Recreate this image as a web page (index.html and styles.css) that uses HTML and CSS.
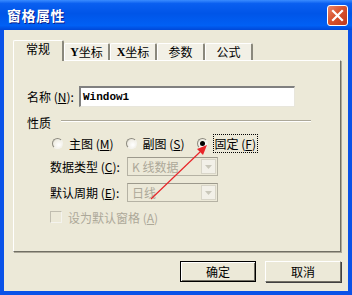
FILE: index.html
```html
<!DOCTYPE html>
<html lang="zh-CN">
<head>
  <meta charset="UTF-8">
  <title>窗格属性</title>
  <link rel="stylesheet" href="styles.css">
</head>
<body>
<div class="window">
  <div class="titlebar">
    <span class="title">窗格属性</span>
    <button class="close-btn">
      <svg width="13" height="13" viewBox="0 0 13 13"><path d="M2 2 L11 11 M11 2 L2 11" stroke="#fff" stroke-width="2.2" stroke-linecap="square"/></svg>
    </button>
  </div>
  <div class="client">
    <div class="tabs">
      <div class="tab active">常规</div>
      <div class="tab w46"><span class="latin">Y</span>坐标</div>
      <div class="tab w47"><span class="latin">X</span>坐标</div>
      <div class="tab w48">参数</div>
      <div class="tab w48">公式</div>
    </div>
    <div class="panel">
      <div class="name-row">
        <span class="label">名称 (<u>N</u>):</span>
        <div class="textbox">Window1</div>
      </div>
      <div class="group-head">
        <span>性质</span>
        <div class="group-line"></div>
      </div>
      <div class="radio-row">
        <div class="radio-item"><span class="radio"></span>主图 (<u>M</u>)</div>
        <div class="radio-item"><span class="radio"></span>副图 (<u>S</u>)</div>
        <div class="radio-item"><span class="radio checked"></span><span class="focus">固定 (<u>F</u>)</span></div>
      </div>
      <div class="field-row">
        <span class="field-label">数据类型 (<u>C</u>):</span>
        <div class="combo"><span class="combo-text">K 线数据</span><span class="combo-btn"><svg width="7" height="4" viewBox="0 0 7 4"><path d="M0 0 H7 L3.5 4 Z" fill="#C9C7BA"/></svg></span></div>
      </div>
      <div class="field-row second">
        <span class="field-label">默认周期 (<u>E</u>):</span>
        <div class="combo"><span class="combo-text">日线</span><span class="combo-btn"><svg width="7" height="4" viewBox="0 0 7 4"><path d="M0 0 H7 L3.5 4 Z" fill="#C9C7BA"/></svg></span></div>
      </div>
      <div class="check-row">
        <span class="checkbox"></span>设为默认窗格 (<u>A</u>)
      </div>
    </div>
    <div class="buttons">
      <button class="btn default">确定</button>
      <button class="btn">取消</button>
    </div>
  </div>
  <svg class="annot" width="352" height="295" viewBox="0 0 352 295">
    <line x1="151" y1="199" x2="200" y2="152" stroke="#E8262A" stroke-width="1.2"/>
    <path d="M207 145 L197 149 L203 155 Z" fill="#E8262A"/>
  </svg>
</div>
</body>
</html>
```

FILE: styles.css
```css
body {
  margin: 0;
  padding: 0;
  font-family: "Noto Sans CJK SC", "Liberation Sans", sans-serif;
  font-size: 12px;
  background: #ffffff;
}
.window {
  position: relative;
  width: 352px;
  height: 295px;
  box-sizing: border-box;
  background: #0A52E8;
  display: flex;
  flex-direction: column;
  padding: 0 4px 4px 4px;
}
.titlebar {
  height: 30px;
  margin: 0 -4px;
  padding: 0 4px 0 7px;
  display: flex;
  align-items: center;
  justify-content: space-between;
  background: linear-gradient(to bottom, #3A8CFF 0%, #0A5FF0 12%, #0055E8 45%, #0060F5 85%, #0048D8 100%);
}
.title {
  color: #ffffff;
  font-weight: bold;
  font-size: 14px;
  letter-spacing: 0.5px;
  text-shadow: 1px 1px 0 #0A1E8C;
}
.close-btn {
  width: 21px;
  height: 21px;
  margin-right: 0;
  padding: 0;
  border: 1px solid #ffffff;
  border-radius: 3px;
  background: linear-gradient(to bottom right, #E9856A 0%, #D8532E 45%, #C0391B 100%);
  display: flex;
  align-items: center;
  justify-content: center;
}
.client {
  flex: 1;
  background: #ECE9D8;
  padding: 11px 0 0 9px;
}
.tabs {
  display: flex;
  align-items: flex-end;
  height: 20px;
  margin-bottom: -1px;
  position: relative;
  z-index: 1;
}
.tab {
  height: 17px;
  margin-bottom: 1px;
  box-sizing: border-box;
  border-top: 1px solid #ffffff;
  border-left: 1px solid #ffffff;
  border-right: 2px solid #8A887C;
  border-radius: 2px 2px 0 0;
  background: #F2F0E6;
  display: flex;
  align-items: center;
  justify-content: center;
  color: #000000;
  line-height: 14px;
}
.tab.active {
  width: 51px;
  height: 21px;
  margin-bottom: 0;
  background: #ECE9D8;
  align-items: flex-start;
  padding-top: 1px;
}
.w46 { width: 46px; }
.w47 { width: 47px; }
.w48 { width: 48px; }
.latin {
  font-family: "Liberation Serif", serif;
  font-weight: bold;
  font-size: 12px;
}
.panel {
  width: 328px;
  height: 192px;
  box-sizing: border-box;
  border-top: 1px solid #ffffff;
  border-left: 1px solid #ffffff;
  border-right: 1px solid #716F64;
  border-bottom: 1px solid #716F64;
  box-shadow: 1px 1px 0 #ACA899;
  padding: 24px 0 0 13px;
}
.name-row {
  display: flex;
  align-items: center;
  height: 22px;
}
.label {
  width: 52px;
}
.textbox {
  width: 216px;
  height: 21px;
  box-sizing: border-box;
  border-top: 2px solid #808080;
  border-left: 2px solid #808080;
  border-right: 1px solid #E8E6DC;
  border-bottom: 1px solid #E8E6DC;
  background: #ffffff;
  font-family: "Liberation Mono", monospace;
  font-size: 11px;
  font-weight: bold;
  padding-left: 2px;
  line-height: 18px;
}
.group-head {
  display: flex;
  align-items: center;
  margin-top: 8px;
  height: 14px;
}
.group-line {
  width: 250px;
  margin-left: 10px;
  border-top: 1px solid #ACA899;
  border-bottom: 1px solid #ffffff;
  margin-top: -2px;
}
.radio-row {
  display: flex;
  align-items: center;
  height: 16px;
  margin-top: 6px;
  padding-left: 25px;
}
.radio-item {
  display: flex;
  align-items: center;
  margin-right: 12px;
}
.radio {
  width: 11px;
  height: 11px;
  border-radius: 50%;
  box-sizing: border-box;
  border: 1px solid;
  border-color: #8D8B80 #F4F3EE #F4F3EE #8D8B80;
  background: radial-gradient(circle at 65% 65%, #ffffff 0%, #F1EFE6 60%, #D6D3C6 100%);
  margin-right: 6px;
  position: relative;
}
.radio.checked::after {
  content: "";
  position: absolute;
  left: 2px;
  top: 2px;
  width: 5px;
  height: 5px;
  border-radius: 50%;
  background: #000000;
}
.focus {
  outline: 1px dotted #000000;
  padding: 0 1px;
}
.field-row {
  display: flex;
  align-items: center;
  height: 19px;
  margin-top: 6px;
  padding-left: 23px;
}
.field-row.second {
  margin-top: 7px;
}
.field-label {
  width: 77px;
}
.combo {
  width: 91px;
  height: 19px;
  box-sizing: border-box;
  border: 1px solid #B5B2A4;
  border-top-color: #9C998C;
  background: #ECE9D8;
  display: flex;
  align-items: center;
  justify-content: space-between;
  padding: 0 1px 0 4px;
}
.combo-text {
  color: #ACA899;
}
.combo-btn {
  width: 15px;
  height: 15px;
  box-sizing: border-box;
  border: 1px solid #D8D5C8;
  background: #F2F0E8;
  display: flex;
  align-items: center;
  justify-content: center;
}
.check-row {
  display: flex;
  align-items: center;
  height: 14px;
  margin-top: 8px;
  padding-left: 23px;
  color: #ACA899;
}
.checkbox {
  width: 12px;
  height: 12px;
  box-sizing: border-box;
  border: 1px solid #C9C7BA;
  border-color: #C0BDAF #F4F3EE #F4F3EE #C0BDAF;
  background: #ECE9D8;
  margin-right: 6px;
}
.buttons {
  display: flex;
  justify-content: flex-end;
  gap: 9px;
  width: 328px;
  margin-top: 9px;
}
.btn {
  width: 76px;
  height: 21px;
  padding: 0;
  font-family: "Noto Sans CJK SC", sans-serif;
  font-size: 12px;
  color: #000000;
  background: #ECE9D8;
  border: 1px solid;
  border-color: #ffffff #716F64 #716F64 #ffffff;
  box-shadow: 1px 1px 0 #404040;
}
.btn.default {
  border: 1px solid #000000;
  box-shadow: inset 1px 1px 0 #ffffff, inset -1px -1px 0 #716F64;
}
.annot {
  position: absolute;
  left: 0;
  top: 0;
  pointer-events: none;
}
```
